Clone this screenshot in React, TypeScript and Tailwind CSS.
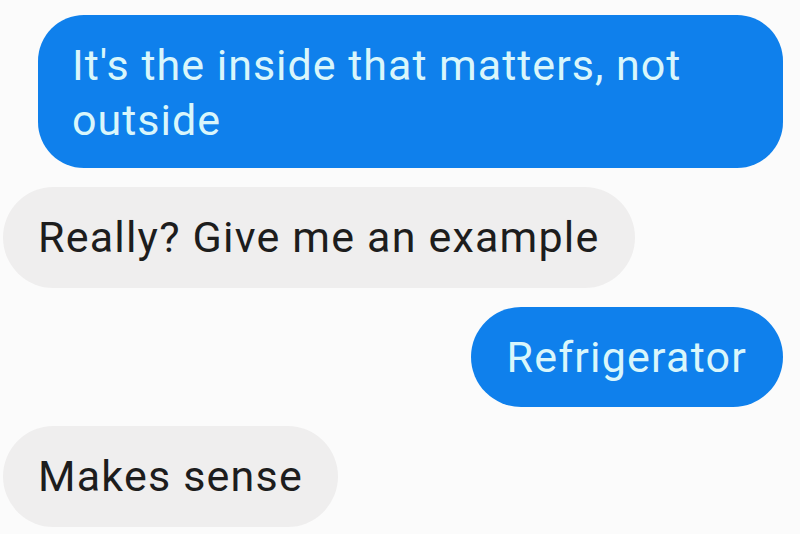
import React from "react";

type Msg = { text: string; mine: boolean };

const messages: Msg[] = [
  { text: "It's the inside that matters, not outside", mine: true },
  { text: "Really? Give me an example", mine: false },
  { text: "Refrigerator", mine: true },
  { text: "Makes sense", mine: false },
];

const Bubble: React.FC<{ msg: Msg; first?: boolean }> = ({ msg, first }) => {
  if (msg.mine && first) {
    // long sent message wraps onto two lines
    return (
      <div className="self-end w-[745px] rounded-[46px] bg-[#0f80ec] pl-[34px] pr-[40px] pt-[23px] pb-[20px] text-[43px] leading-[55px] tracking-[1px] text-[#d9f6fb]">
        {msg.text}
      </div>
    );
  }
  if (msg.mine) {
    return (
      <div className="self-end flex h-[100px] items-center rounded-full bg-[#0f80ec] px-[36px] text-[43px] tracking-[1.2px] text-[#d9f6fb]">
        {msg.text}
      </div>
    );
  }
  return (
    <div className="self-start ml-[3px] flex h-[101px] items-center rounded-full bg-[#efeeee] pl-[35px] pr-[35px] text-[43px] tracking-[1.2px] text-[#1d1d1d]">
      {msg.text}
    </div>
  );
};

export default function App() {
  return (
    <div
      className="flex h-[534px] w-[800px] flex-col gap-[19px] overflow-hidden bg-[#fbfbfb] pt-[15px] pr-[17px]"
      style={{ fontFamily: "Roboto, 'Liberation Sans', sans-serif" }}
    >
      {messages.map((m, i) => (
        <Bubble key={i} msg={m} first={i === 0} />
      ))}
    </div>
  );
}
